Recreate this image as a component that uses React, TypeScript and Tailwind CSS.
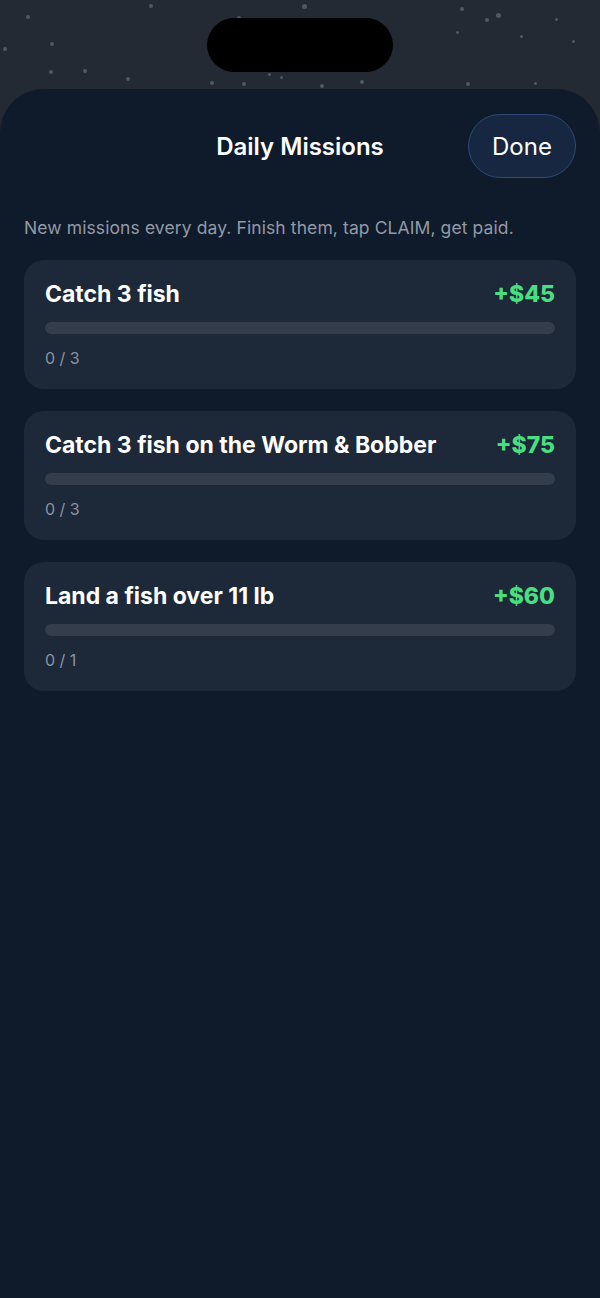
import React from 'react';

interface Mission {
  title: string;
  reward: number;
  progress: number;
  goal: number;
}

const missions: Mission[] = [
  { title: 'Catch 3 fish', reward: 45, progress: 0, goal: 3 },
  { title: 'Catch 3 fish on the Worm & Bobber', reward: 75, progress: 0, goal: 3 },
  { title: 'Land a fish over 11 lb', reward: 60, progress: 0, goal: 1 },
];

// background specks behind the sheet
const stars: [number, number, number][] = [
  [26, 15, 4], [149, 4, 4], [302, 4, 5], [237, 16, 4], [50, 42, 4], [3, 47, 4],
  [83, 69, 4], [49, 70, 4], [126, 77, 4], [210, 81, 4], [242, 82, 4], [268, 73, 3],
  [280, 76, 3], [320, 84, 4], [360, 80, 4], [460, 7, 4], [485, 18, 4], [496, 13, 5],
  [456, 31, 3], [466, 82, 4], [520, 35, 3], [572, 40, 3], [12, 112, 3], [555, 18, 3],
  [534, 82, 3],
];

const App: React.FC = () => {
  return (
    <div
      className="relative min-h-[1298px] w-[600px] overflow-hidden bg-[#242a33]"
      style={{ fontFamily: 'Inter, "Noto Sans", sans-serif' }}
    >
      {/* starfield */}
      {stars.map(([x, y, s], i) => (
        <div
          key={i}
          className="absolute rounded-full bg-[#505863]"
          style={{ left: x, top: y, width: s, height: s }}
        />
      ))}

      {/* dynamic island */}
      <div className="flex h-[89px] justify-center pt-[18px]">
        <div className="relative z-10 h-[54px] w-[186px] rounded-full bg-black" />
      </div>

      {/* sheet */}
      <div className="relative min-h-[1209px] rounded-t-[44px] bg-[#0f1a2b] px-6 pt-[25px]">
        <div className="relative flex h-16 items-center justify-center">
          <h1 className="pt-[2px] text-[24px] font-semibold text-white">Daily Missions</h1>
          <button className="absolute right-0 top-0 h-16 w-[108px] rounded-full border border-[#2c4a74] bg-[#172741] pt-[2px] text-[24px] font-normal text-white">
            Done
          </button>
        </div>

        <p className="mt-[38px] text-[17.5px] leading-6 tracking-[0.1px] text-[#929aa6]">
          New missions every day. Finish them, tap CLAIM, get paid.
        </p>

        <div className="mt-5 flex flex-col gap-[22px]">
          {missions.map((m) => (
            <div key={m.title} className="rounded-[20px] bg-[#1d2838] px-[21px] pb-5 pt-5">
              <div className="flex h-7 items-center justify-between">
                <span className="text-[23px] font-bold leading-7 text-white">{m.title}</span>
                <span className="text-[23px] font-extrabold leading-7 text-[#4ade80]">+${m.reward}</span>
              </div>
              <div className="mt-[14px] h-3 w-full overflow-hidden rounded-full bg-[#333d4c]">
                <div
                  className="h-full rounded-full bg-[#4ade80]"
                  style={{ width: `${(m.progress / m.goal) * 100}%` }}
                />
              </div>
              <div className="mt-[13px] text-[16px] leading-[22px] text-[#8a93a0]">
                {m.progress} / {m.goal}
              </div>
            </div>
          ))}
        </div>
      </div>
    </div>
  );
};

export default App;
